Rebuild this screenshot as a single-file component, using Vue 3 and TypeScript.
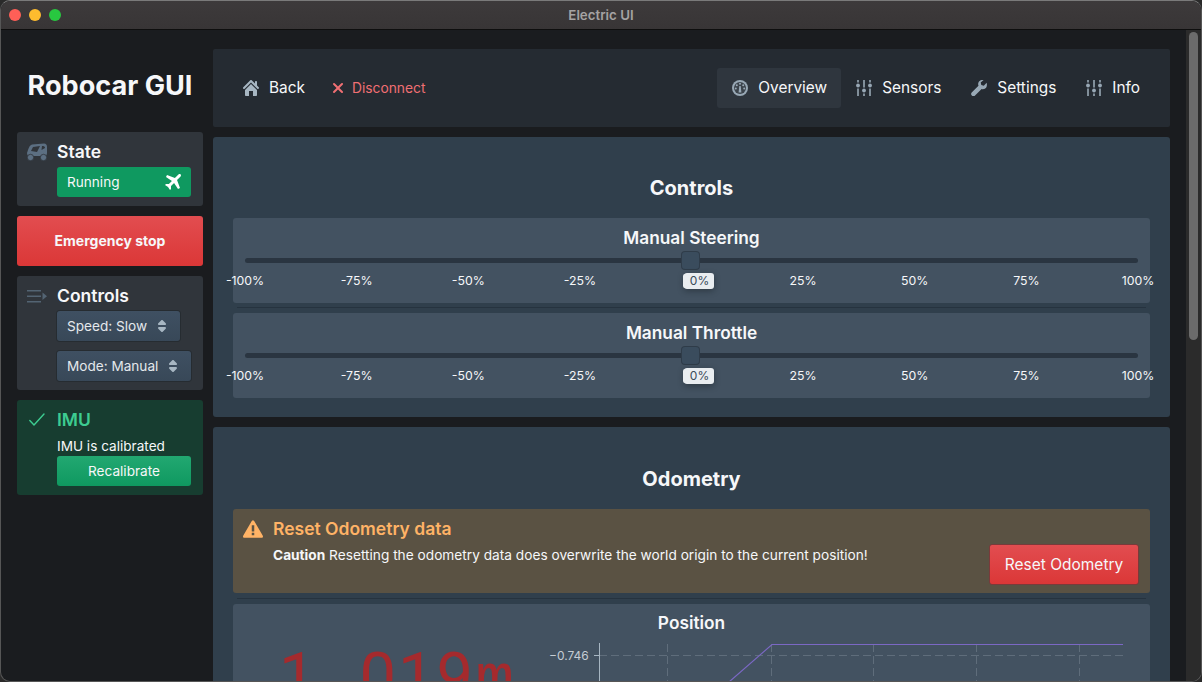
<script setup lang="ts">
const ticks: string[] = ["-100%", "-75%", "-50%", "-25%", "", "25%", "50%", "75%", "100%"];
const sliders: string[] = ["Manual Steering", "Manual Throttle"];
const gridLines: number[] = [120.5, 224.5, 326.5, 429.5, 532.5];
</script>

<template>
  <div class="window">
    <div class="titlebar">
      <div class="lights">
        <span class="light red"></span>
        <span class="light yellow"></span>
        <span class="light green"></span>
      </div>
      <span class="window-title">Electric UI</span>
    </div>

    <div class="content">
      <aside class="sidebar">
        <h1 class="brand">Robocar GUI</h1>

        <section class="side-card">
          <svg class="side-icon" viewBox="0 0 20 18" width="20" height="18">
            <path fill="#5c6f82" fill-rule="evenodd" d="M1 7C2 4 3 2 5 1.500L17 .5C19 .5 20 2 20 4V10C20 12 19 13 17 13H3C1 13 0 12 0 10ZM6 4 4 8l6 1 3-6zm9-1-.5 4L18 5c0-1.500-1-2-3-2z"/>
            <circle cx="3.500" cy="14.500" r="3.200" fill="#5c6f82" stroke="#30353b" stroke-width=".8"/>
            <circle cx="16.500" cy="14.500" r="3.200" fill="#5c6f82" stroke="#30353b" stroke-width=".8"/>
          </svg>
          <div class="side-body">
            <h2 class="side-title">State</h2>
            <div class="status-pill">
              <span>Running</span>
              <svg viewBox="0 0 16 16" width="16" height="16">
                <path fill="#fff" d="M16 1.500A1.498 1.498 0 0013.440.440L9.910 3.970 2 1 1 3l5.930 3.950L3.880 10H1l-1 1 3 2 2 3 1-1v-2.880l3.050-3.050L13 15l2-1-2.970-7.910 3.530-3.530c.270-.270.440-.650.440-1.060z"/>
              </svg>
            </div>
          </div>
        </section>

        <button class="estop">Emergency stop</button>

        <section class="side-card">
          <svg class="side-icon controls-icon" viewBox="0 0 20 13" width="20" height="13">
            <rect x="0" y="0" width="14" height="1.500" fill="#536473"/>
            <rect x="0" y="5.500" width="14" height="1.500" fill="#536473"/>
            <rect x="0" y="11" width="14" height="1.500" fill="#536473"/>
            <polygon points="15.500,2.500 20,6.250 15.500,10" fill="#536473"/>
          </svg>
          <div class="side-body">
            <h2 class="side-title">Controls</h2>
            <div class="select-btn speed">
              <span>Speed: Slow</span>
              <svg viewBox="0 0 16 16" width="16" height="16">
                <path fill="#a7b6c2" d="M5 7h6a1.003 1.003 0 00.710-1.710l-3-3C8.530 2.110 8.280 2 8 2s-.530.110-.710.290l-3 3A1.003 1.003 0 005 7zm6 2H5a1.003 1.003 0 00-.710 1.710l3 3c.180.180.430.290.710.290s.530-.110.710-.290l3-3A1.003 1.003 0 0011 9z"/>
              </svg>
            </div>
            <div class="select-btn mode">
              <span>Mode: Manual</span>
              <svg viewBox="0 0 16 16" width="16" height="16">
                <path fill="#a7b6c2" d="M5 7h6a1.003 1.003 0 00.710-1.710l-3-3C8.530 2.110 8.280 2 8 2s-.530.110-.710.290l-3 3A1.003 1.003 0 005 7zm6 2H5a1.003 1.003 0 00-.710 1.710l3 3c.180.180.430.290.710.290s.530-.110.710-.290l3-3A1.003 1.003 0 0011 9z"/>
              </svg>
            </div>
          </div>
        </section>

        <section class="side-card imu">
          <svg class="side-icon tick" viewBox="-2 -2 20 20" width="20" height="20">
            <path fill="none" stroke="#3dcc91" stroke-width="1.400" stroke-linecap="round" stroke-linejoin="round" d="M.8 8.500l4.200 4.500 10-11"/>
          </svg>
          <div class="side-body">
            <h2 class="side-title imu-title">IMU</h2>
            <p class="imu-text">IMU is calibrated</p>
            <button class="recal">Recalibrate</button>
          </div>
        </section>
      </aside>

      <main class="main">
        <nav class="navbar">
          <div class="nav-group">
            <div class="nav-btn">
              <svg viewBox="0 0 16 16" width="16" height="16">
                <path fill="#a7b6c2" d="M2 10v5c0 .550.450 1 1 1h3v-5h4v5h3c.550 0 1-.450 1-1v-5L8 4l-6 6zm13.710-2.710L14 5.590V2c0-.550-.450-1-1-1s-1 .450-1 1v1.590L8.710.290C8.530.110 8.280 0 8 0s-.530.110-.710.290l-7 7a1.003 1.003 0 001.420 1.420L8 2.410l6.290 6.290c.180.180.430.290.710.290a1.003 1.003 0 00.710-1.700z"/>
              </svg>
              <span>Back</span>
            </div>
            <div class="nav-btn danger">
              <svg viewBox="0 0 16 16" width="16" height="16">
                <path fill="#f06f73" d="M9.410 8l3.290-3.290c.190-.180.300-.430.300-.710a1.003 1.003 0 00-1.710-.710L8 6.590l-3.290-3.300a1.003 1.003 0 00-1.420 1.420L6.590 8 3.300 11.290c-.190.180-.300.430-.300.710a1.003 1.003 0 001.710.710L8 9.410l3.290 3.290c.180.190.430.300.710.300a1.003 1.003 0 00.710-1.710L9.410 8z"/>
              </svg>
              <span>Disconnect</span>
            </div>
          </div>
          <div class="nav-group">
            <div class="nav-btn active">
              <svg viewBox="0 0 16 16" width="16" height="16">
                <circle cx="8" cy="8" r="8" fill="#98a8b5"/>
                <circle cx="8" cy="8" r="6" fill="#3c444c"/>
                <circle cx="8" cy="3.800" r="1" fill="#98a8b5"/>
                <circle cx="4.800" cy="5.200" r="1" fill="#98a8b5"/>
                <circle cx="11.200" cy="5.200" r="1" fill="#98a8b5"/>
                <circle cx="3.800" cy="8.500" r="1" fill="#98a8b5"/>
                <circle cx="12.200" cy="8.500" r="1" fill="#98a8b5"/>
                <path fill="#98a8b5" d="M7.300 6h1.400l.7 6.500H6.600z"/>
              </svg>
              <span>Overview</span>
            </div>
            <div class="nav-btn">
              <svg viewBox="0 0 16 16" width="16" height="16">
                <g fill="#98a8b5">
                  <rect x="1.200" y="0" width="1.600" height="2.500"/><rect x="1.200" y="8.500" width="1.600" height="7.500"/><circle cx="2" cy="5.500" r="1.900"/>
                  <rect x="7.200" y="0" width="1.600" height="7.500"/><rect x="7.200" y="13.500" width="1.600" height="2.500"/><circle cx="8" cy="10.500" r="1.900"/>
                  <rect x="13.200" y="0" width="1.600" height="2.500"/><rect x="13.200" y="8.500" width="1.600" height="7.500"/><circle cx="14" cy="5.500" r="1.900"/>
                </g>
              </svg>
              <span>Sensors</span>
            </div>
            <div class="nav-btn">
              <svg viewBox="0 0 16 16" width="16" height="16">
                <path fill="#98a8b5" d="M15.600 2.800l-2.800 2.900-2.500-.6-.6-2.500L12.600.1C10.700-.4 8.700.3 7.700 2c-.7 1.200-.7 2.600-.2 3.800L.7 12.600a2.200 2.200 0 003.100 3.100l6.800-6.800c1.800.6 3.800 0 4.800-1.700.6-1.400.7-3 .2-4.400z"/>
              </svg>
              <span>Settings</span>
            </div>
            <div class="nav-btn">
              <svg viewBox="0 0 16 16" width="16" height="16">
                <g fill="#98a8b5">
                  <rect x="1.200" y="0" width="1.600" height="2.500"/><rect x="1.200" y="8.500" width="1.600" height="7.500"/><circle cx="2" cy="5.500" r="1.900"/>
                  <rect x="7.200" y="0" width="1.600" height="7.500"/><rect x="7.200" y="13.500" width="1.600" height="2.500"/><circle cx="8" cy="10.500" r="1.900"/>
                  <rect x="13.200" y="0" width="1.600" height="2.500"/><rect x="13.200" y="8.500" width="1.600" height="7.500"/><circle cx="14" cy="5.500" r="1.900"/>
                </g>
              </svg>
              <span>Info</span>
            </div>
          </div>
        </nav>

        <section class="panel">
          <h2 class="panel-title">Controls</h2>
          <template v-for="(name, i) in sliders" :key="name">
            <hr v-if="i > 0" class="divider" />
            <div class="card slider-card">
              <h3 class="card-title">{{ name }}</h3>
              <div class="slider">
                <div class="track">
                  <span class="handle"></span>
                  <span class="handle-tag">0%</span>
                </div>
                <div class="ticks">
                  <span v-for="(t, j) in ticks" :key="j" class="tick-label">{{ t }}</span>
                </div>
              </div>
            </div>
          </template>
        </section>

        <section class="panel odometry">
          <h2 class="panel-title">Odometry</h2>
          <div class="card alert">
            <div class="alert-text">
              <h3 class="alert-title">
                <svg viewBox="0 0 16 16" width="20" height="20">
                  <path fill="#ffb366" fill-rule="evenodd" d="M15.840 13.500l.010-.010-7-12-.010.010c-.170-.300-.480-.500-.850-.500s-.670.200-.850.500l-.010-.010-7 12 .010.010c-.090.150-.150.310-.150.500 0 .550.450 1 1 1h14c.550 0 1-.450 1-1 0-.190-.060-.350-.150-.500zM9 13H7v-2h2v2zm0-3H7V5h2v5z"/>
                </svg>
                Reset Odometry data
              </h3>
              <p><strong>Caution</strong> Resetting the odometry data does overwrite the world origin to the current position!</p>
            </div>
            <button class="reset-btn">Reset Odometry</button>
          </div>
          <hr class="divider wide" />
          <div class="card position">
            <h3 class="card-title">Position</h3>
            <div class="position-row">
              <div class="big-value">1<span class="point">.</span>019<span class="unit">m</span></div>
              <svg class="chart" viewBox="0 0 603 60" width="603" height="60">
                <text x="2" y="16.500" class="axis-text">−0.746</text>
                <line v-for="x in gridLines" :key="x" :x1="x" y1="1" :x2="x" y2="60" class="grid" />
                <line x1="52" y1="12.500" x2="577" y2="12.500" class="grid" />
                <line x1="47" y1="12.500" x2="52" y2="12.500" class="axis" />
                <line x1="52.500" y1="0" x2="52.500" y2="60" class="axis" />
                <polyline points="182,39 225,1.500 576,1.500" class="trace" />
              </svg>
            </div>
          </div>
        </section>
      </main>

      <div class="scrollbar">
        <div class="thumb"></div>
      </div>
    </div>
  </div>
</template>

<style>
html,
body {
  margin: 0;
  background: #2a2a2a;
  overflow: hidden;
}
</style>

<style scoped>
* {
  box-sizing: border-box;
}

.window {
  width: 1202px;
  height: 682px;
  display: flex;
  flex-direction: column;
  overflow: hidden;
  background: #1a1c1f;
  border-radius: 10px;
  border: 1px solid #565656;
  border-top-color: #7a7a7a;
  font-family: Inter, "Liberation Sans", sans-serif;
  color: #f6f7f9;
}

.titlebar {
  height: 29px;
  flex-shrink: 0;
  display: flex;
  align-items: center;
  justify-content: center;
  position: relative;
  background: linear-gradient(#3d3a3b, #383536);
  border-bottom: 1px solid #0e0e0e;
}

.lights {
  position: absolute;
  left: 8px;
  top: 8px;
  display: flex;
  gap: 8px;
}

.light {
  width: 12px;
  height: 12px;
  border-radius: 50%;
}

.red { background: #ff5f57; }
.yellow { background: #febc2e; }
.green { background: #28c840; }

.window-title {
  font-size: 13.300px;
  font-weight: 600;
  color: #a5a3a3;
}

.content {
  flex: 1;
  min-height: 0;
  display: flex;
}

.sidebar {
  width: 212px;
  flex-shrink: 0;
  padding: 0 10px 0 16px;
  display: flex;
  flex-direction: column;
  gap: 10px;
}

.brand {
  margin: 39px 0 20px;
  height: 33px;
  line-height: 33px;
  font-size: 27.100px;
  font-weight: 700;
  text-align: center;
  white-space: nowrap;
}

.side-card {
  display: flex;
  background: #30353b;
  border-radius: 3px;
  padding: 10px 12px 9px 10px;
}

.side-icon {
  flex-shrink: 0;
  margin-right: 10px;
  margin-top: 1px;
}

.controls-icon {
  margin-top: 4px;
}

.side-body {
  flex: 1;
  min-width: 0;
}

.side-title {
  margin: 0 0 5px;
  font-size: 17.500px;
  line-height: 20px;
  font-weight: 600;
}

.status-pill {
  height: 30px;
  border-radius: 3px;
  background: #0f9960;
  display: flex;
  align-items: center;
  justify-content: space-between;
  padding: 0 10px;
  font-size: 13.600px;
}

.estop {
  height: 50px;
  padding: 0 0 2px;
  border: none;
  border-radius: 3px;
  background: linear-gradient(#e24d50, #db3737);
  color: #f6f7f9;
  font: 700 14px Inter, sans-serif;
}

.select-btn {
  height: 30px;
  margin-bottom: 10px;
  border-radius: 3px;
  background: linear-gradient(#3f5062, #384858);
  box-shadow: 0 0 0 1px rgba(16, 22, 26, 0.3);
  display: flex;
  align-items: center;
  justify-content: space-between;
  padding: 0 10px;
  font-size: 13.600px;
  color: #e4e8ec;
}

.select-btn.mode {
  margin-bottom: 0;
}

.select-btn.speed {
  width: 123px;
}

.imu {
  background: #173d30;
}

.tick {
  margin-top: 0;
}

.imu-title {
  color: #3dcc91;
  margin-bottom: 7px;
}

.imu-text {
  margin: 0;
  font-size: 13.600px;
  line-height: 19px;
}

.recal {
  width: 100%;
  height: 30px;
  border: none;
  border-radius: 3px;
  background: linear-gradient(#22a871, #0f9960);
  color: #f6f7f9;
  font: 400 13.600px Inter, sans-serif;
}

.main {
  width: 957px;
  flex-shrink: 0;
  padding-top: 19px;
  display: flex;
  flex-direction: column;
  gap: 10px;
}

.navbar {
  height: 78px;
  flex-shrink: 0;
  display: flex;
  align-items: center;
  justify-content: space-between;
  padding: 0 15px;
  background: #252b32;
  border-radius: 2px;
}

.nav-group {
  display: flex;
  align-items: center;
}

.nav-btn {
  height: 40px;
  display: flex;
  align-items: center;
  gap: 10px;
  padding: 0 15px;
  font-size: 15.400px;
  border-radius: 3px;
}

.nav-btn span {
  margin-top: -2px;
}

.nav-btn.danger {
  padding: 0 0 0 10px;
  font-size: 13.800px;
  color: #f06f73;
  gap: 6px;
}

.nav-btn.danger span {
  margin-top: 0;
}

.nav-btn.active {
  background: #2f363e;
  padding-right: 14px;
}

.panel {
  flex-shrink: 0;
  background: #303f4c;
  border-radius: 3px;
  padding: 39px 20px 19px;
}

.panel-title {
  margin: 0 0 18px;
  font-size: 20px;
  line-height: 24px;
  font-weight: 700;
  text-align: center;
}

.odometry {
  padding-top: 40px;
}

.card {
  background: #435261;
  border-radius: 3px;
}

.divider {
  height: 1px;
  border: none;
  margin: 4px 4px 5px;
  background: #26333f;
}

.divider.wide {
  margin-top: 5px;
}

.slider-card {
  height: 85px;
  padding: 9px 12px 0;
}

.card-title {
  margin: 0;
  font-size: 17.300px;
  line-height: 22px;
  font-weight: 600;
  text-align: center;
}

.slider {
  margin-top: 9px;
}

.track {
  height: 5px;
  border-radius: 3px;
  background: #2a3541;
  position: relative;
}

.handle {
  position: absolute;
  left: 437px;
  top: -6px;
  width: 17px;
  height: 17px;
  border-radius: 3px;
  background: #3a4c5d;
  box-shadow: 0 0 0 1px #2f3c49;
}

.handle-tag {
  position: absolute;
  left: 439px;
  top: 15px;
  width: 30px;
  height: 16px;
  padding-left: 1px;
  border-radius: 3px;
  background: #e9edf0;
  color: #394b59;
  font-size: 12px;
  line-height: 16px;
  text-align: center;
  box-shadow: -2px 0 0 -1px #e9edf0, 0 2px 6px rgba(16, 22, 26, 0.4);
}

.ticks {
  display: flex;
  justify-content: space-between;
  margin-top: 10px;
}

.tick-label {
  width: 0;
  display: flex;
  justify-content: center;
  font-size: 12.300px;
  line-height: 16px;
  white-space: nowrap;
}

.alert {
  height: 84px;
  background: #5a5243;
  display: flex;
  justify-content: space-between;
  padding: 9px 11px 0 10px;
  font-size: 13.700px;
}

.alert-title {
  display: flex;
  align-items: center;
  gap: 10px;
  margin: 0 0 6px;
  color: #ffb366;
  font-size: 17.500px;
  line-height: 22px;
  font-weight: 600;
}

.alert-text p {
  margin: 0 0 0 30px;
  line-height: 18px;
}

.alert-text strong {
  font-weight: 700;
}

.reset-btn {
  width: 150px;
  height: 41px;
  margin-top: 26px;
  border: 1px solid #7a3a3a;
  border-radius: 3px;
  background: linear-gradient(#e24d50, #db3737);
  color: #f6f7f9;
  font: 400 15.500px Inter, sans-serif;
}

.position {
  padding-top: 8px;
  height: 200px;
}

.position-row {
  display: flex;
  margin-top: 9px;
}

.big-value {
  width: 314px;
  padding-left: 46px;
  padding-top: 3px;
  font-family: Roboto, sans-serif;
  font-size: 65px;
  letter-spacing: 2px;
  line-height: 60px;
  color: #a52a2d;
  white-space: nowrap;
}

.point {
  display: inline-block;
  width: 42px;
  text-align: center;
}

.unit {
  font-family: "Liberation Mono", monospace;
}

.chart {
  flex-shrink: 0;
}

.axis-text {
  font-size: 12px;
  fill: #c5ccd3;
  font-family: Inter, sans-serif;
}

.grid {
  stroke: #5f6d7b;
  stroke-width: 1;
  stroke-dasharray: 8 4;
}

.axis {
  stroke: #a7b6c2;
  stroke-width: 1;
}

.trace {
  fill: none;
  stroke: #7b68c4;
  stroke-width: 1.200;
}

.scrollbar {
  margin-left: 16px;
  flex: 1;
  background: #2b2b2b;
  padding: 2px 3px;
}

.thumb {
  height: 308px;
  border-radius: 5px;
  background: #6b6b6b;
}
</style>
